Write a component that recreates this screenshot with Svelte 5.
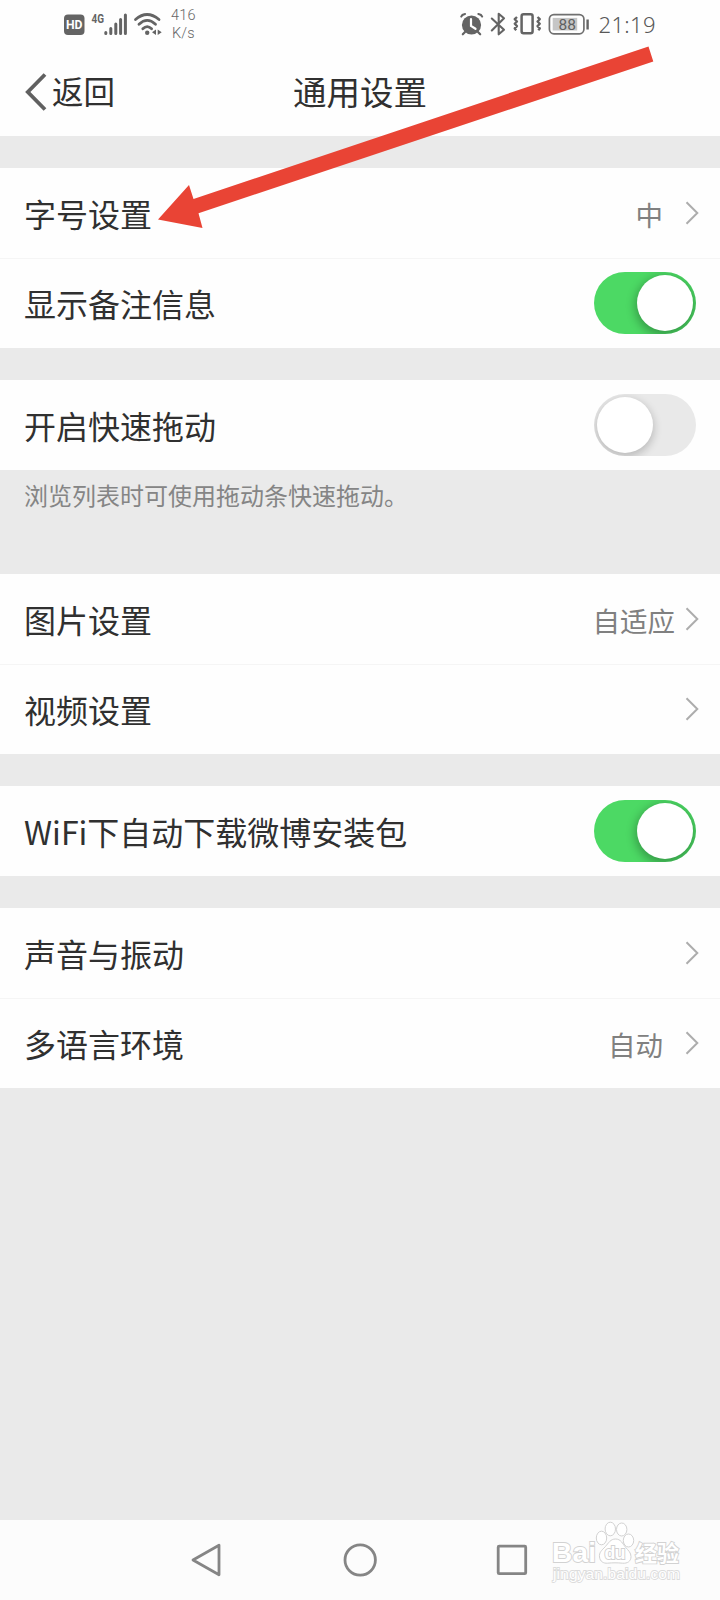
<script>
  // Settings, one array per white block
  let groups = [
    {
      rows: [
        { label: "字号设置", value: "中" },
        { label: "显示备注信息", toggle: true, on: true }
      ]
    },
    {
      rows: [{ label: "开启快速拖动", toggle: true, on: false }],
      note: "浏览列表时可使用拖动条快速拖动。"
    },
    {
      rows: [
        { label: "图片设置", value: "自适应", tight: true },
        { label: "视频设置" }
      ]
    },
    {
      rows: [{ label: "WiFi下自动下载微博安装包", toggle: true, on: true }]
    },
    {
      rows: [
        { label: "声音与振动" },
        { label: "多语言环境", value: "自动" }
      ]
    }
  ];

  function flip(row) {
    row.on = !row.on;
    groups = groups;
  }
</script>

<main>
  <div class="status">
    <svg class="status-left" width="150" height="48" viewBox="60 0 150 48">
      <rect x="64" y="14.5" width="20.5" height="20.5" rx="4" fill="#646464" />
      <text x="66" y="29.3" class="hd" textLength="16.5" lengthAdjust="spacingAndGlyphs">HD</text>
      <text x="91.5" y="22.6" class="net" textLength="12.5" lengthAdjust="spacingAndGlyphs">4G</text>
      <g stroke="#646464" stroke-width="3" stroke-linecap="round">
        <path d="M105.8 32.5v1M110.8 28.5v5M115.8 24v9.5M120.6 19.5v14M125.4 15v18.5" />
      </g>
      <g fill="none" stroke="#646464" stroke-width="2.8" stroke-linecap="round">
        <path d="M135.5 19.5Q147 9.5 159 19.5" />
        <path d="M139 24.3Q147.2 16.5 155.5 24.3" />
        <path d="M142.8 28.7Q147.2 24.5 151.6 28.7" />
      </g>
      <circle cx="147.2" cy="32.7" r="2.2" fill="#646464" />
      <path d="M156 29.5v5.6l-4-2.8zM157.7 29.5v5.6l4-2.8z" fill="#646464" />
      <text x="171" y="20.3" class="speed" textLength="24.5">416</text>
      <text x="172" y="37.6" class="speed" textLength="22.5">K/s</text>
    </svg>

    <svg class="status-right" width="200" height="48" viewBox="456 0 200 48">
      <circle cx="471.5" cy="25" r="9.6" fill="#646464" />
      <path d="M461.3 16.5Q462 14.5 465 14M482.1 16.5Q481.4 14.5 478.4 14M465 32l-2.2 2.3M478 32l2.2 2.3" fill="none" stroke="#646464" stroke-width="2.2" stroke-linecap="round" />
      <path d="M471 19v7l4.5 2.8" fill="none" stroke="#fff" stroke-width="2.2" stroke-linecap="round" />
      <path d="M491.8 18.5L504 29.8l-5.3 4.5V13.7l5.3 4.5L491.8 30.5" fill="none" stroke="#646464" stroke-width="2.1" stroke-linejoin="round" stroke-linecap="round" />
      <rect x="521.6" y="14.2" width="11" height="19" rx="2" fill="none" stroke="#646464" stroke-width="2.5" />
      <path d="M517 17l-2.3 2.2 2.3 2.3-2.3 2.3 2.3 2.3-2.3 2.3 1.5 1.8M537.5 17l2.3 2.2-2.3 2.3 2.3 2.3-2.3 2.3 2.3 2.3-1.5 1.8" fill="none" stroke="#646464" stroke-width="2.3" stroke-linejoin="round" />
      <rect x="549.4" y="14.6" width="34.5" height="19.2" rx="4.5" fill="none" stroke="#707070" stroke-width="1.7" />
      <rect x="552.7" y="17.9" width="24.5" height="12.6" fill="#c6c6c6" />
      <text x="558.5" y="29.6" class="charge" textLength="17.5">88</text>
      <path d="M587.6 19.5v10" stroke="#646464" stroke-width="2.4" />
      <text x="598.5" y="32.6" class="clock" textLength="57">21:19</text>
    </svg>
  </div>

  <header>
    <button class="back">
      <svg width="22" height="38" viewBox="0 0 22 38">
        <path d="M20 1.5L2.8 19 20 36.5" fill="none" stroke="#606060" stroke-width="3.8" />
      </svg>
      <span>返回</span>
    </button>
    <h1>通用设置</h1>
  </header>

  {#each groups as group}
    <section>
      {#each group.rows as row}
        <div class="row">
          <span class="label">{row.label}</span>
          {#if row.toggle}
            <button class="switch" class:on={row.on} aria-label={row.label} on:click={() => flip(row)}>
              <span class="knob"></span>
            </button>
          {:else}
            {#if row.value}
              <span class="value" class:tight={row.tight}>{row.value}</span>
            {/if}
            <svg class="chevron" width="14" height="24" viewBox="0 0 14 24">
              <path d="M1.5 1.2L12.3 12 1.5 22.8" fill="none" stroke="#adadad" stroke-width="2" />
            </svg>
          {/if}
        </div>
      {/each}
    </section>
    {#if group.note}
      <p class="note">{group.note}</p>
    {/if}
  {/each}

  <nav>
    <svg width="36" height="36" viewBox="0 0 36 36">
      <path d="M30 3.2v29.6L4 18z" />
    </svg>
    <svg width="36" height="36" viewBox="0 0 36 36">
      <circle cx="18.2" cy="18" r="15.2" />
    </svg>
    <svg width="36" height="36" viewBox="0 0 36 36">
      <rect x="3.2" y="4.2" width="27.5" height="27.5" rx="1" />
    </svg>
  </nav>

  <!-- Red pointer to the font size row -->
  <svg class="arrow" width="720" height="250" viewBox="0 0 720 250">
    <path d="M158 219.5L189 185l4.5 14L648.5 46.5l4.8 15L198.5 213.3l4 14.7z" fill="#e94435" />
  </svg>

  <svg class="watermark" width="150" height="72" viewBox="545 1515 150 72">
    <g fill="#fff" stroke="#d2d2d2" stroke-width="1">
      <text x="552" y="1562" class="brand" textLength="44">Bai</text>
      <ellipse cx="601.5" cy="1538" rx="5.2" ry="6.8" />
      <ellipse cx="610.3" cy="1529" rx="5.2" ry="6.8" />
      <ellipse cx="621.7" cy="1529.5" rx="5.2" ry="6.5" />
      <ellipse cx="628.5" cy="1540.5" rx="5.2" ry="6.5" />
      <path d="M615.5 1539c-5 0-7 4-10 7.5-4 4-6.5 6-6 10.5.5 4.5 4 6.5 8 6.2 5-.5 10-.5 15 0 5 .4 8.5-2 8.5-6.5 0-4-2.5-6-5.5-9.5-3-3.5-4.5-8.2-10-8.2z" />
      <text x="604.5" y="1559" class="du" textLength="21">du</text>
      <text x="635" y="1561" class="cn" textLength="44">经验</text>
      <text x="553" y="1579" class="site" textLength="127">jingyan.baidu.com</text>
    </g>
  </svg>
</main>

<style>
  :global(body) {
    background: #eaeaea;
  }

  main {
    position: relative;
    display: flex;
    flex-direction: column;
    width: 720px;
    height: 1600px;
    overflow: hidden;
    background: #eaeaea;
    color: #303030;
    font-family: "Noto Sans CJK SC", sans-serif;
  }

  button {
    border: 0;
    padding: 0;
    background: none;
    color: inherit;
    font: inherit;
  }

  svg {
    display: block;
    flex: none;
  }

  .status {
    display: flex;
    justify-content: space-between;
    height: 48px;
    padding: 0 64px 0 60px;
    background: #fefefe;
  }

  .hd {
    font: bold 12.5px Roboto, sans-serif;
    fill: #fff;
  }

  .net {
    font: bold 12.5px Roboto, sans-serif;
    fill: #646464;
  }

  .speed {
    font: 300 14.5px Roboto, sans-serif;
    fill: #666;
  }

  .charge {
    font: 15.5px Roboto, sans-serif;
    fill: #606060;
  }

  .clock {
    font: 300 22px "Noto Sans", sans-serif;
    fill: #585858;
  }

  /* Title bar */
  header {
    display: grid;
    grid-template-columns: 1fr auto 1fr;
    align-items: center;
    height: 88px;
    padding: 0 25px;
    background: #fefefe;
  }

  .back {
    display: flex;
    align-items: center;
    gap: 5px;
    font-size: 31.5px;
    line-height: 40px;
  }

  .back span {
    margin-top: -4px;
  }

  .back span,
  h1 {
    font-family: KaiTi, STKaiti, "Noto Sans CJK SC", sans-serif;
    font-weight: 400;
  }

  h1 {
    margin: 0 0 2px;
    font-size: 33.5px;
    line-height: 40px;
  }

  section {
    margin-top: 32px;
    background: #fefefe;
  }

  header,
  section,
  .note,
  .status {
    flex: none;
  }

  .row {
    display: flex;
    align-items: center;
    box-sizing: border-box;
    height: 90px;
    padding: 0 21px 0 24px;
  }

  .row + .row {
    box-shadow: inset 0 1px #f5f5f5;
  }

  .label {
    flex: 1;
    font-size: 32px;
    line-height: 40px;
  }

  .value {
    margin-right: 22px;
    padding-top: 2px;
    color: #808080;
    font-size: 27.5px;
    line-height: 36px;
  }

  .value.tight {
    margin-right: 10px;
  }

  .switch {
    box-sizing: border-box;
    width: 102px;
    height: 62px;
    margin-right: 3px;
    padding: 3px;
    border-radius: 31px;
    background: #e9e9e9;
    overflow: hidden;
  }

  .knob {
    display: block;
    width: 56px;
    height: 56px;
    border-radius: 50%;
    background: #fff;
    box-shadow: 0 3px 9px 1px rgba(0, 0, 0, 0.2);
  }

  .switch.on {
    background: #4cd964;
  }

  .switch.on .knob {
    margin-left: 40px;
    box-shadow: 0 3px 10px 2px rgba(0, 0, 0, 0.28);
  }

  .note {
    box-sizing: border-box;
    height: 72px;
    margin: 0;
    padding: 9px 24px 0;
    color: #858585;
    font-size: 24px;
    line-height: 32px;
  }

  /* System navigation keys */
  nav {
    display: grid;
    grid-template-columns: repeat(3, 1fr);
    place-items: center;
    height: 80px;
    margin-top: auto;
    padding: 0 130px;
    background: #fcfcfc;
  }

  nav svg {
    fill: none;
    stroke: #858585;
    stroke-width: 2.8;
    stroke-linejoin: round;
  }

  .arrow {
    position: absolute;
    top: 0;
    left: 0;
    pointer-events: none;
  }

  .watermark {
    position: absolute;
    top: 1515px;
    left: 545px;
    pointer-events: none;
  }

  .watermark text {
    paint-order: stroke;
    stroke-width: 1.8;
  }

  .brand {
    font: bold 28px "Liberation Sans", sans-serif;
  }

  .du {
    font: bold 18px "Liberation Sans", sans-serif;
  }

  .cn {
    font: bold 22px "Noto Sans CJK SC", sans-serif;
  }

  .watermark .site {
    font: 15.5px "Liberation Sans", sans-serif;
    stroke: #dcdcdc;
  }
</style>
